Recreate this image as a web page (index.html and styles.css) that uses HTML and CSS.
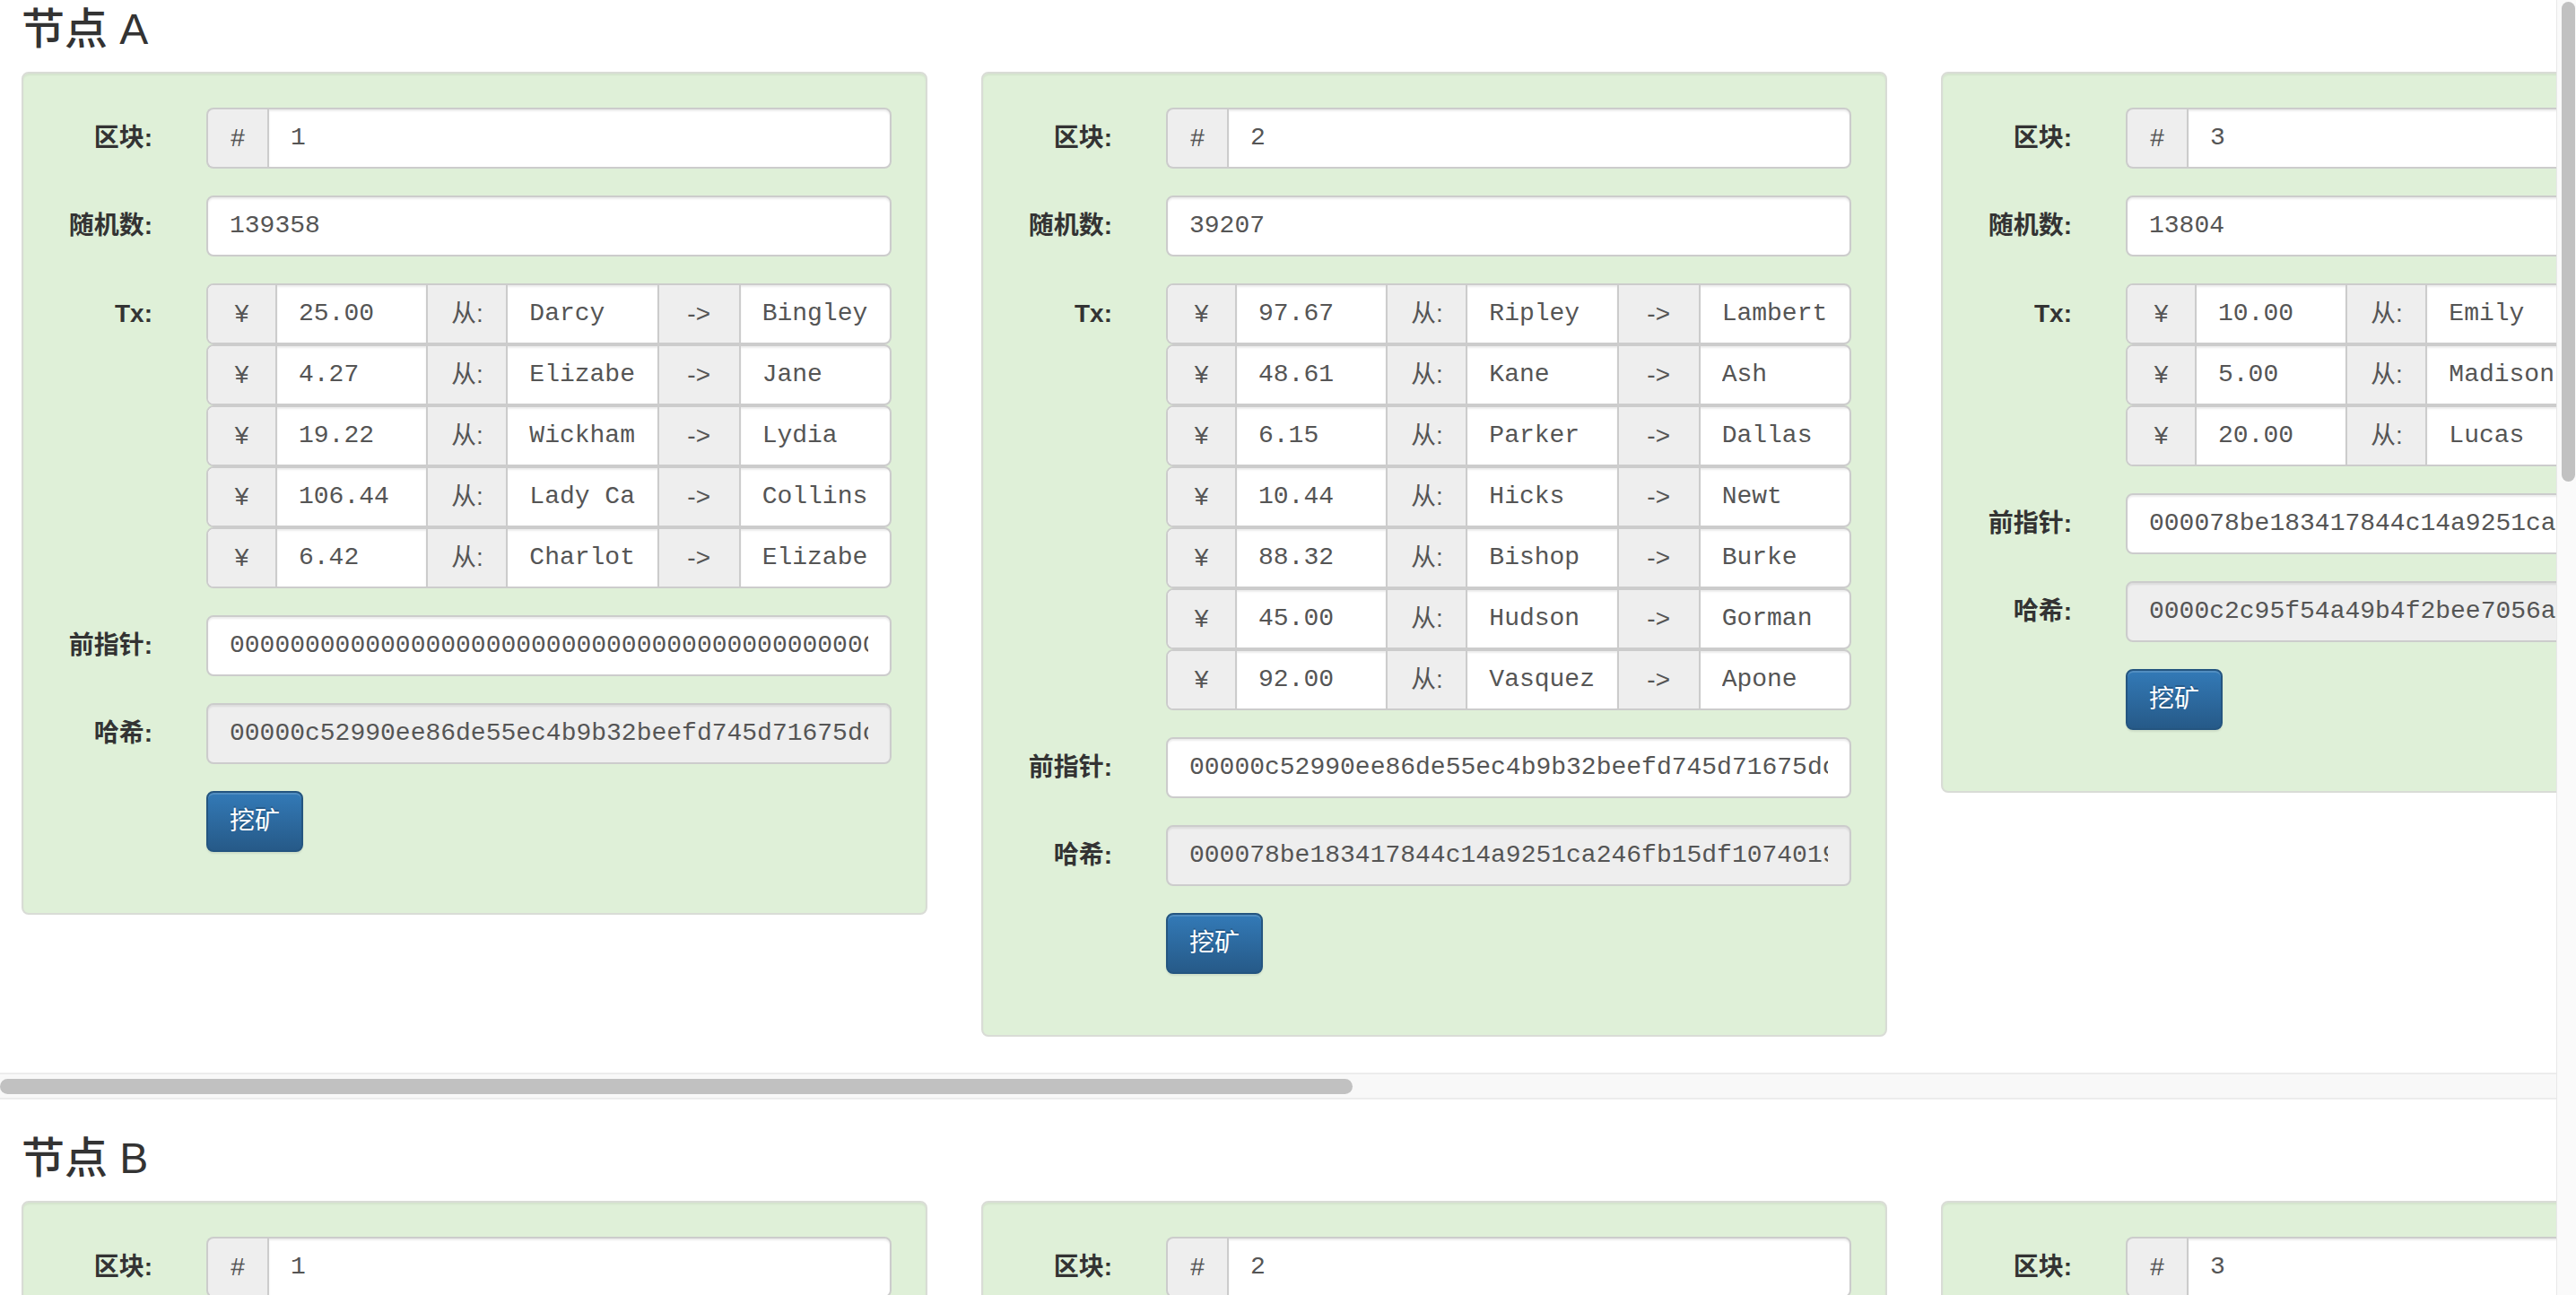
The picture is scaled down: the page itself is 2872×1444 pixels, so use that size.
FILE: index.html
```html
<!DOCTYPE html>
<html lang="zh-CN">
<head>
<meta charset="utf-8">
<title>区块链 - 分布式</title>
<link rel="stylesheet" href="styles.css">
</head>
<body>
<div class="viewport">
<main class="page">

<section class="node">
  <h3 class="node-title">节点 A</h3>
  <div class="chain">
    <div class="block">
      <div class="form-row"><div class="label">区块:</div><div class="group"><span class="addon">#</span><div class="field"><span>1</span></div></div></div>
      <div class="form-row"><div class="label">随机数:</div><div class="field"><span>139358</span></div></div>
      <div class="form-row"><div class="label">Tx:</div><div class="txs">
        <div class="tx"><span class="addon">¥</span><div class="cell"><span>25.00</span></div><span class="addon">从:</span><div class="cell"><span>Darcy</span></div><span class="addon">-&gt;</span><div class="cell"><span>Bingley</span></div></div>
        <div class="tx"><span class="addon">¥</span><div class="cell"><span>4.27</span></div><span class="addon">从:</span><div class="cell"><span>Elizabeth</span></div><span class="addon">-&gt;</span><div class="cell"><span>Jane</span></div></div>
        <div class="tx"><span class="addon">¥</span><div class="cell"><span>19.22</span></div><span class="addon">从:</span><div class="cell"><span>Wickham</span></div><span class="addon">-&gt;</span><div class="cell"><span>Lydia</span></div></div>
        <div class="tx"><span class="addon">¥</span><div class="cell"><span>106.44</span></div><span class="addon">从:</span><div class="cell"><span>Lady Catherine de Bourgh</span></div><span class="addon">-&gt;</span><div class="cell"><span>Collins</span></div></div>
        <div class="tx"><span class="addon">¥</span><div class="cell"><span>6.42</span></div><span class="addon">从:</span><div class="cell"><span>Charlotte</span></div><span class="addon">-&gt;</span><div class="cell"><span>Elizabeth</span></div></div>
      </div></div>
      <div class="form-row"><div class="label">前指针:</div><div class="field"><span>0000000000000000000000000000000000000000000000000000000000000000</span></div></div>
      <div class="form-row"><div class="label">哈希:</div><div class="field readonly"><span>00000c52990ee86de55ec4b9b32beefd745d71675dc2a3f0b1e6d8c94a7e5b2f</span></div></div>
      <div class="form-row"><button class="btn" type="button">挖矿</button></div>
    </div>
    <div class="block">
      <div class="form-row"><div class="label">区块:</div><div class="group"><span class="addon">#</span><div class="field"><span>2</span></div></div></div>
      <div class="form-row"><div class="label">随机数:</div><div class="field"><span>39207</span></div></div>
      <div class="form-row"><div class="label">Tx:</div><div class="txs">
        <div class="tx"><span class="addon">¥</span><div class="cell"><span>97.67</span></div><span class="addon">从:</span><div class="cell"><span>Ripley</span></div><span class="addon">-&gt;</span><div class="cell"><span>Lambert</span></div></div>
        <div class="tx"><span class="addon">¥</span><div class="cell"><span>48.61</span></div><span class="addon">从:</span><div class="cell"><span>Kane</span></div><span class="addon">-&gt;</span><div class="cell"><span>Ash</span></div></div>
        <div class="tx"><span class="addon">¥</span><div class="cell"><span>6.15</span></div><span class="addon">从:</span><div class="cell"><span>Parker</span></div><span class="addon">-&gt;</span><div class="cell"><span>Dallas</span></div></div>
        <div class="tx"><span class="addon">¥</span><div class="cell"><span>10.44</span></div><span class="addon">从:</span><div class="cell"><span>Hicks</span></div><span class="addon">-&gt;</span><div class="cell"><span>Newt</span></div></div>
        <div class="tx"><span class="addon">¥</span><div class="cell"><span>88.32</span></div><span class="addon">从:</span><div class="cell"><span>Bishop</span></div><span class="addon">-&gt;</span><div class="cell"><span>Burke</span></div></div>
        <div class="tx"><span class="addon">¥</span><div class="cell"><span>45.00</span></div><span class="addon">从:</span><div class="cell"><span>Hudson</span></div><span class="addon">-&gt;</span><div class="cell"><span>Gorman</span></div></div>
        <div class="tx"><span class="addon">¥</span><div class="cell"><span>92.00</span></div><span class="addon">从:</span><div class="cell"><span>Vasquez</span></div><span class="addon">-&gt;</span><div class="cell"><span>Apone</span></div></div>
      </div></div>
      <div class="form-row"><div class="label">前指针:</div><div class="field"><span>00000c52990ee86de55ec4b9b32beefd745d71675dc2a3f0b1e6d8c94a7e5b2f</span></div></div>
      <div class="form-row"><div class="label">哈希:</div><div class="field readonly"><span>000078be183417844c14a9251ca246fb15df1074019a3c5e7d2b8f6041e3c9d2</span></div></div>
      <div class="form-row"><button class="btn" type="button">挖矿</button></div>
    </div>
    <div class="block">
      <div class="form-row"><div class="label">区块:</div><div class="group"><span class="addon">#</span><div class="field"><span>3</span></div></div></div>
      <div class="form-row"><div class="label">随机数:</div><div class="field"><span>13804</span></div></div>
      <div class="form-row"><div class="label">Tx:</div><div class="txs">
        <div class="tx"><span class="addon">¥</span><div class="cell"><span>10.00</span></div><span class="addon">从:</span><div class="cell"><span>Emily</span></div><span class="addon">-&gt;</span><div class="cell"><span>Jackson</span></div></div>
        <div class="tx"><span class="addon">¥</span><div class="cell"><span>5.00</span></div><span class="addon">从:</span><div class="cell"><span>Madison</span></div><span class="addon">-&gt;</span><div class="cell"><span>Jackson</span></div></div>
        <div class="tx"><span class="addon">¥</span><div class="cell"><span>20.00</span></div><span class="addon">从:</span><div class="cell"><span>Lucas</span></div><span class="addon">-&gt;</span><div class="cell"><span>Grace</span></div></div>
      </div></div>
      <div class="form-row"><div class="label">前指针:</div><div class="field"><span>000078be183417844c14a9251ca246fb15df1074019a3c5e7d2b8f6041e3c9d2</span></div></div>
      <div class="form-row"><div class="label">哈希:</div><div class="field readonly"><span>0000c2c95f54a49b4f2bee7056ad1e8f3b2c7a9045e6b1d3f8c2a7e5b90d4c61</span></div></div>
      <div class="form-row"><button class="btn" type="button">挖矿</button></div>
    </div>
    <div class="block">
      <div class="form-row"><div class="label">区块:</div><div class="group"><span class="addon">#</span><div class="field"><span>4</span></div></div></div>
      <div class="form-row"><div class="label">随机数:</div><div class="field"><span>19668</span></div></div>
      <div class="form-row"><div class="label">Tx:</div><div class="txs">
        <div class="tx"><span class="addon">¥</span><div class="cell"><span>62.19</span></div><span class="addon">从:</span><div class="cell"><span>Jackson</span></div><span class="addon">-&gt;</span><div class="cell"><span>Ryan</span></div></div>
        <div class="tx"><span class="addon">¥</span><div class="cell"><span>867.11</span></div><span class="addon">从:</span><div class="cell"><span>Alexander</span></div><span class="addon">-&gt;</span><div class="cell"><span>Sophia</span></div></div>
        <div class="tx"><span class="addon">¥</span><div class="cell"><span>17.88</span></div><span class="addon">从:</span><div class="cell"><span>Liam</span></div><span class="addon">-&gt;</span><div class="cell"><span>Olivia</span></div></div>
      </div></div>
      <div class="form-row"><div class="label">前指针:</div><div class="field"><span>0000c2c95f54a49b4f2bee7056ad1e8f3b2c7a9045e6b1d3f8c2a7e5b90d4c61</span></div></div>
      <div class="form-row"><div class="label">哈希:</div><div class="field readonly"><span>0000a3f1e9b7c2d5846f0e1b3a7c9d2e5f8b1a4c6d9e0f3a2b5c8d1e4f7a0b3c</span></div></div>
      <div class="form-row"><button class="btn" type="button">挖矿</button></div>
    </div>
    <div class="block">
      <div class="form-row"><div class="label">区块:</div><div class="group"><span class="addon">#</span><div class="field"><span>5</span></div></div></div>
      <div class="form-row"><div class="label">随机数:</div><div class="field"><span>56125</span></div></div>
      <div class="form-row"><div class="label">Tx:</div><div class="txs">
        <div class="tx"><span class="addon">¥</span><div class="cell"><span>15.00</span></div><span class="addon">从:</span><div class="cell"><span>Ryan</span></div><span class="addon">-&gt;</span><div class="cell"><span>Ava</span></div></div>
        <div class="tx"><span class="addon">¥</span><div class="cell"><span>3.75</span></div><span class="addon">从:</span><div class="cell"><span>Sophia</span></div><span class="addon">-&gt;</span><div class="cell"><span>Noah</span></div></div>
        <div class="tx"><span class="addon">¥</span><div class="cell"><span>41.02</span></div><span class="addon">从:</span><div class="cell"><span>Grace</span></div><span class="addon">-&gt;</span><div class="cell"><span>Ethan</span></div></div>
        <div class="tx"><span class="addon">¥</span><div class="cell"><span>8.60</span></div><span class="addon">从:</span><div class="cell"><span>Olivia</span></div><span class="addon">-&gt;</span><div class="cell"><span>Mia</span></div></div>
      </div></div>
      <div class="form-row"><div class="label">前指针:</div><div class="field"><span>0000a3f1e9b7c2d5846f0e1b3a7c9d2e5f8b1a4c6d9e0f3a2b5c8d1e4f7a0b3c</span></div></div>
      <div class="form-row"><div class="label">哈希:</div><div class="field readonly"><span>00008b2e4f6a1c3d5e7f9a0b2c4d6e8f1a3b5c7d9e0f2a4b6c8d1e3f5a7b9c0d</span></div></div>
      <div class="form-row"><button class="btn" type="button">挖矿</button></div>
    </div>
  </div>
  <div class="hscroll"><div class="hthumb" style="width: 52.9%"></div></div>
</section>

<section class="node">
  <h3 class="node-title">节点 B</h3>
  <div class="chain">
    <div class="block">
      <div class="form-row"><div class="label">区块:</div><div class="group"><span class="addon">#</span><div class="field"><span>1</span></div></div></div>
      <div class="form-row"><div class="label">随机数:</div><div class="field"><span>139358</span></div></div>
      <div class="form-row"><div class="label">Tx:</div><div class="txs">
        <div class="tx"><span class="addon">¥</span><div class="cell"><span>25.00</span></div><span class="addon">从:</span><div class="cell"><span>Darcy</span></div><span class="addon">-&gt;</span><div class="cell"><span>Bingley</span></div></div>
        <div class="tx"><span class="addon">¥</span><div class="cell"><span>4.27</span></div><span class="addon">从:</span><div class="cell"><span>Elizabeth</span></div><span class="addon">-&gt;</span><div class="cell"><span>Jane</span></div></div>
        <div class="tx"><span class="addon">¥</span><div class="cell"><span>19.22</span></div><span class="addon">从:</span><div class="cell"><span>Wickham</span></div><span class="addon">-&gt;</span><div class="cell"><span>Lydia</span></div></div>
        <div class="tx"><span class="addon">¥</span><div class="cell"><span>106.44</span></div><span class="addon">从:</span><div class="cell"><span>Lady Catherine de Bourgh</span></div><span class="addon">-&gt;</span><div class="cell"><span>Collins</span></div></div>
        <div class="tx"><span class="addon">¥</span><div class="cell"><span>6.42</span></div><span class="addon">从:</span><div class="cell"><span>Charlotte</span></div><span class="addon">-&gt;</span><div class="cell"><span>Elizabeth</span></div></div>
      </div></div>
      <div class="form-row"><div class="label">前指针:</div><div class="field"><span>0000000000000000000000000000000000000000000000000000000000000000</span></div></div>
      <div class="form-row"><div class="label">哈希:</div><div class="field readonly"><span>00000c52990ee86de55ec4b9b32beefd745d71675dc2a3f0b1e6d8c94a7e5b2f</span></div></div>
      <div class="form-row"><button class="btn" type="button">挖矿</button></div>
    </div>
    <div class="block">
      <div class="form-row"><div class="label">区块:</div><div class="group"><span class="addon">#</span><div class="field"><span>2</span></div></div></div>
      <div class="form-row"><div class="label">随机数:</div><div class="field"><span>39207</span></div></div>
      <div class="form-row"><div class="label">Tx:</div><div class="txs">
        <div class="tx"><span class="addon">¥</span><div class="cell"><span>97.67</span></div><span class="addon">从:</span><div class="cell"><span>Ripley</span></div><span class="addon">-&gt;</span><div class="cell"><span>Lambert</span></div></div>
        <div class="tx"><span class="addon">¥</span><div class="cell"><span>48.61</span></div><span class="addon">从:</span><div class="cell"><span>Kane</span></div><span class="addon">-&gt;</span><div class="cell"><span>Ash</span></div></div>
        <div class="tx"><span class="addon">¥</span><div class="cell"><span>6.15</span></div><span class="addon">从:</span><div class="cell"><span>Parker</span></div><span class="addon">-&gt;</span><div class="cell"><span>Dallas</span></div></div>
        <div class="tx"><span class="addon">¥</span><div class="cell"><span>10.44</span></div><span class="addon">从:</span><div class="cell"><span>Hicks</span></div><span class="addon">-&gt;</span><div class="cell"><span>Newt</span></div></div>
        <div class="tx"><span class="addon">¥</span><div class="cell"><span>88.32</span></div><span class="addon">从:</span><div class="cell"><span>Bishop</span></div><span class="addon">-&gt;</span><div class="cell"><span>Burke</span></div></div>
        <div class="tx"><span class="addon">¥</span><div class="cell"><span>45.00</span></div><span class="addon">从:</span><div class="cell"><span>Hudson</span></div><span class="addon">-&gt;</span><div class="cell"><span>Gorman</span></div></div>
        <div class="tx"><span class="addon">¥</span><div class="cell"><span>92.00</span></div><span class="addon">从:</span><div class="cell"><span>Vasquez</span></div><span class="addon">-&gt;</span><div class="cell"><span>Apone</span></div></div>
      </div></div>
      <div class="form-row"><div class="label">前指针:</div><div class="field"><span>00000c52990ee86de55ec4b9b32beefd745d71675dc2a3f0b1e6d8c94a7e5b2f</span></div></div>
      <div class="form-row"><div class="label">哈希:</div><div class="field readonly"><span>000078be183417844c14a9251ca246fb15df1074019a3c5e7d2b8f6041e3c9d2</span></div></div>
      <div class="form-row"><button class="btn" type="button">挖矿</button></div>
    </div>
    <div class="block">
      <div class="form-row"><div class="label">区块:</div><div class="group"><span class="addon">#</span><div class="field"><span>3</span></div></div></div>
      <div class="form-row"><div class="label">随机数:</div><div class="field"><span>13804</span></div></div>
      <div class="form-row"><div class="label">Tx:</div><div class="txs">
        <div class="tx"><span class="addon">¥</span><div class="cell"><span>10.00</span></div><span class="addon">从:</span><div class="cell"><span>Emily</span></div><span class="addon">-&gt;</span><div class="cell"><span>Jackson</span></div></div>
        <div class="tx"><span class="addon">¥</span><div class="cell"><span>5.00</span></div><span class="addon">从:</span><div class="cell"><span>Madison</span></div><span class="addon">-&gt;</span><div class="cell"><span>Jackson</span></div></div>
        <div class="tx"><span class="addon">¥</span><div class="cell"><span>20.00</span></div><span class="addon">从:</span><div class="cell"><span>Lucas</span></div><span class="addon">-&gt;</span><div class="cell"><span>Grace</span></div></div>
      </div></div>
      <div class="form-row"><div class="label">前指针:</div><div class="field"><span>000078be183417844c14a9251ca246fb15df1074019a3c5e7d2b8f6041e3c9d2</span></div></div>
      <div class="form-row"><div class="label">哈希:</div><div class="field readonly"><span>0000c2c95f54a49b4f2bee7056ad1e8f3b2c7a9045e6b1d3f8c2a7e5b90d4c61</span></div></div>
      <div class="form-row"><button class="btn" type="button">挖矿</button></div>
    </div>
    <div class="block">
      <div class="form-row"><div class="label">区块:</div><div class="group"><span class="addon">#</span><div class="field"><span>4</span></div></div></div>
      <div class="form-row"><div class="label">随机数:</div><div class="field"><span>19668</span></div></div>
      <div class="form-row"><div class="label">Tx:</div><div class="txs">
        <div class="tx"><span class="addon">¥</span><div class="cell"><span>62.19</span></div><span class="addon">从:</span><div class="cell"><span>Jackson</span></div><span class="addon">-&gt;</span><div class="cell"><span>Ryan</span></div></div>
        <div class="tx"><span class="addon">¥</span><div class="cell"><span>867.11</span></div><span class="addon">从:</span><div class="cell"><span>Alexander</span></div><span class="addon">-&gt;</span><div class="cell"><span>Sophia</span></div></div>
        <div class="tx"><span class="addon">¥</span><div class="cell"><span>17.88</span></div><span class="addon">从:</span><div class="cell"><span>Liam</span></div><span class="addon">-&gt;</span><div class="cell"><span>Olivia</span></div></div>
      </div></div>
      <div class="form-row"><div class="label">前指针:</div><div class="field"><span>0000c2c95f54a49b4f2bee7056ad1e8f3b2c7a9045e6b1d3f8c2a7e5b90d4c61</span></div></div>
      <div class="form-row"><div class="label">哈希:</div><div class="field readonly"><span>0000a3f1e9b7c2d5846f0e1b3a7c9d2e5f8b1a4c6d9e0f3a2b5c8d1e4f7a0b3c</span></div></div>
      <div class="form-row"><button class="btn" type="button">挖矿</button></div>
    </div>
    <div class="block">
      <div class="form-row"><div class="label">区块:</div><div class="group"><span class="addon">#</span><div class="field"><span>5</span></div></div></div>
      <div class="form-row"><div class="label">随机数:</div><div class="field"><span>56125</span></div></div>
      <div class="form-row"><div class="label">Tx:</div><div class="txs">
        <div class="tx"><span class="addon">¥</span><div class="cell"><span>15.00</span></div><span class="addon">从:</span><div class="cell"><span>Ryan</span></div><span class="addon">-&gt;</span><div class="cell"><span>Ava</span></div></div>
        <div class="tx"><span class="addon">¥</span><div class="cell"><span>3.75</span></div><span class="addon">从:</span><div class="cell"><span>Sophia</span></div><span class="addon">-&gt;</span><div class="cell"><span>Noah</span></div></div>
        <div class="tx"><span class="addon">¥</span><div class="cell"><span>41.02</span></div><span class="addon">从:</span><div class="cell"><span>Grace</span></div><span class="addon">-&gt;</span><div class="cell"><span>Ethan</span></div></div>
        <div class="tx"><span class="addon">¥</span><div class="cell"><span>8.60</span></div><span class="addon">从:</span><div class="cell"><span>Olivia</span></div><span class="addon">-&gt;</span><div class="cell"><span>Mia</span></div></div>
      </div></div>
      <div class="form-row"><div class="label">前指针:</div><div class="field"><span>0000a3f1e9b7c2d5846f0e1b3a7c9d2e5f8b1a4c6d9e0f3a2b5c8d1e4f7a0b3c</span></div></div>
      <div class="form-row"><div class="label">哈希:</div><div class="field readonly"><span>00008b2e4f6a1c3d5e7f9a0b2c4d6e8f1a3b5c7d9e0f2a4b6c8d1e3f5a7b9c0d</span></div></div>
      <div class="form-row"><button class="btn" type="button">挖矿</button></div>
    </div>
  </div>
  <div class="hscroll"><div class="hthumb" style="width: 52.9%"></div></div>
</section>

<section class="node">
  <h3 class="node-title">节点 C</h3>
  <div class="chain">
    <div class="block">
      <div class="form-row"><div class="label">区块:</div><div class="group"><span class="addon">#</span><div class="field"><span>1</span></div></div></div>
      <div class="form-row"><div class="label">随机数:</div><div class="field"><span>139358</span></div></div>
      <div class="form-row"><div class="label">Tx:</div><div class="txs">
        <div class="tx"><span class="addon">¥</span><div class="cell"><span>25.00</span></div><span class="addon">从:</span><div class="cell"><span>Darcy</span></div><span class="addon">-&gt;</span><div class="cell"><span>Bingley</span></div></div>
        <div class="tx"><span class="addon">¥</span><div class="cell"><span>4.27</span></div><span class="addon">从:</span><div class="cell"><span>Elizabeth</span></div><span class="addon">-&gt;</span><div class="cell"><span>Jane</span></div></div>
        <div class="tx"><span class="addon">¥</span><div class="cell"><span>19.22</span></div><span class="addon">从:</span><div class="cell"><span>Wickham</span></div><span class="addon">-&gt;</span><div class="cell"><span>Lydia</span></div></div>
        <div class="tx"><span class="addon">¥</span><div class="cell"><span>106.44</span></div><span class="addon">从:</span><div class="cell"><span>Lady Catherine de Bourgh</span></div><span class="addon">-&gt;</span><div class="cell"><span>Collins</span></div></div>
        <div class="tx"><span class="addon">¥</span><div class="cell"><span>6.42</span></div><span class="addon">从:</span><div class="cell"><span>Charlotte</span></div><span class="addon">-&gt;</span><div class="cell"><span>Elizabeth</span></div></div>
      </div></div>
      <div class="form-row"><div class="label">前指针:</div><div class="field"><span>0000000000000000000000000000000000000000000000000000000000000000</span></div></div>
      <div class="form-row"><div class="label">哈希:</div><div class="field readonly"><span>00000c52990ee86de55ec4b9b32beefd745d71675dc2a3f0b1e6d8c94a7e5b2f</span></div></div>
      <div class="form-row"><button class="btn" type="button">挖矿</button></div>
    </div>
    <div class="block">
      <div class="form-row"><div class="label">区块:</div><div class="group"><span class="addon">#</span><div class="field"><span>2</span></div></div></div>
      <div class="form-row"><div class="label">随机数:</div><div class="field"><span>39207</span></div></div>
      <div class="form-row"><div class="label">Tx:</div><div class="txs">
        <div class="tx"><span class="addon">¥</span><div class="cell"><span>97.67</span></div><span class="addon">从:</span><div class="cell"><span>Ripley</span></div><span class="addon">-&gt;</span><div class="cell"><span>Lambert</span></div></div>
        <div class="tx"><span class="addon">¥</span><div class="cell"><span>48.61</span></div><span class="addon">从:</span><div class="cell"><span>Kane</span></div><span class="addon">-&gt;</span><div class="cell"><span>Ash</span></div></div>
        <div class="tx"><span class="addon">¥</span><div class="cell"><span>6.15</span></div><span class="addon">从:</span><div class="cell"><span>Parker</span></div><span class="addon">-&gt;</span><div class="cell"><span>Dallas</span></div></div>
        <div class="tx"><span class="addon">¥</span><div class="cell"><span>10.44</span></div><span class="addon">从:</span><div class="cell"><span>Hicks</span></div><span class="addon">-&gt;</span><div class="cell"><span>Newt</span></div></div>
        <div class="tx"><span class="addon">¥</span><div class="cell"><span>88.32</span></div><span class="addon">从:</span><div class="cell"><span>Bishop</span></div><span class="addon">-&gt;</span><div class="cell"><span>Burke</span></div></div>
        <div class="tx"><span class="addon">¥</span><div class="cell"><span>45.00</span></div><span class="addon">从:</span><div class="cell"><span>Hudson</span></div><span class="addon">-&gt;</span><div class="cell"><span>Gorman</span></div></div>
        <div class="tx"><span class="addon">¥</span><div class="cell"><span>92.00</span></div><span class="addon">从:</span><div class="cell"><span>Vasquez</span></div><span class="addon">-&gt;</span><div class="cell"><span>Apone</span></div></div>
      </div></div>
      <div class="form-row"><div class="label">前指针:</div><div class="field"><span>00000c52990ee86de55ec4b9b32beefd745d71675dc2a3f0b1e6d8c94a7e5b2f</span></div></div>
      <div class="form-row"><div class="label">哈希:</div><div class="field readonly"><span>000078be183417844c14a9251ca246fb15df1074019a3c5e7d2b8f6041e3c9d2</span></div></div>
      <div class="form-row"><button class="btn" type="button">挖矿</button></div>
    </div>
    <div class="block">
      <div class="form-row"><div class="label">区块:</div><div class="group"><span class="addon">#</span><div class="field"><span>3</span></div></div></div>
      <div class="form-row"><div class="label">随机数:</div><div class="field"><span>13804</span></div></div>
      <div class="form-row"><div class="label">Tx:</div><div class="txs">
        <div class="tx"><span class="addon">¥</span><div class="cell"><span>10.00</span></div><span class="addon">从:</span><div class="cell"><span>Emily</span></div><span class="addon">-&gt;</span><div class="cell"><span>Jackson</span></div></div>
        <div class="tx"><span class="addon">¥</span><div class="cell"><span>5.00</span></div><span class="addon">从:</span><div class="cell"><span>Madison</span></div><span class="addon">-&gt;</span><div class="cell"><span>Jackson</span></div></div>
        <div class="tx"><span class="addon">¥</span><div class="cell"><span>20.00</span></div><span class="addon">从:</span><div class="cell"><span>Lucas</span></div><span class="addon">-&gt;</span><div class="cell"><span>Grace</span></div></div>
      </div></div>
      <div class="form-row"><div class="label">前指针:</div><div class="field"><span>000078be183417844c14a9251ca246fb15df1074019a3c5e7d2b8f6041e3c9d2</span></div></div>
      <div class="form-row"><div class="label">哈希:</div><div class="field readonly"><span>0000c2c95f54a49b4f2bee7056ad1e8f3b2c7a9045e6b1d3f8c2a7e5b90d4c61</span></div></div>
      <div class="form-row"><button class="btn" type="button">挖矿</button></div>
    </div>
    <div class="block">
      <div class="form-row"><div class="label">区块:</div><div class="group"><span class="addon">#</span><div class="field"><span>4</span></div></div></div>
      <div class="form-row"><div class="label">随机数:</div><div class="field"><span>19668</span></div></div>
      <div class="form-row"><div class="label">Tx:</div><div class="txs">
        <div class="tx"><span class="addon">¥</span><div class="cell"><span>62.19</span></div><span class="addon">从:</span><div class="cell"><span>Jackson</span></div><span class="addon">-&gt;</span><div class="cell"><span>Ryan</span></div></div>
        <div class="tx"><span class="addon">¥</span><div class="cell"><span>867.11</span></div><span class="addon">从:</span><div class="cell"><span>Alexander</span></div><span class="addon">-&gt;</span><div class="cell"><span>Sophia</span></div></div>
        <div class="tx"><span class="addon">¥</span><div class="cell"><span>17.88</span></div><span class="addon">从:</span><div class="cell"><span>Liam</span></div><span class="addon">-&gt;</span><div class="cell"><span>Olivia</span></div></div>
      </div></div>
      <div class="form-row"><div class="label">前指针:</div><div class="field"><span>0000c2c95f54a49b4f2bee7056ad1e8f3b2c7a9045e6b1d3f8c2a7e5b90d4c61</span></div></div>
      <div class="form-row"><div class="label">哈希:</div><div class="field readonly"><span>0000a3f1e9b7c2d5846f0e1b3a7c9d2e5f8b1a4c6d9e0f3a2b5c8d1e4f7a0b3c</span></div></div>
      <div class="form-row"><button class="btn" type="button">挖矿</button></div>
    </div>
    <div class="block">
      <div class="form-row"><div class="label">区块:</div><div class="group"><span class="addon">#</span><div class="field"><span>5</span></div></div></div>
      <div class="form-row"><div class="label">随机数:</div><div class="field"><span>56125</span></div></div>
      <div class="form-row"><div class="label">Tx:</div><div class="txs">
        <div class="tx"><span class="addon">¥</span><div class="cell"><span>15.00</span></div><span class="addon">从:</span><div class="cell"><span>Ryan</span></div><span class="addon">-&gt;</span><div class="cell"><span>Ava</span></div></div>
        <div class="tx"><span class="addon">¥</span><div class="cell"><span>3.75</span></div><span class="addon">从:</span><div class="cell"><span>Sophia</span></div><span class="addon">-&gt;</span><div class="cell"><span>Noah</span></div></div>
        <div class="tx"><span class="addon">¥</span><div class="cell"><span>41.02</span></div><span class="addon">从:</span><div class="cell"><span>Grace</span></div><span class="addon">-&gt;</span><div class="cell"><span>Ethan</span></div></div>
        <div class="tx"><span class="addon">¥</span><div class="cell"><span>8.60</span></div><span class="addon">从:</span><div class="cell"><span>Olivia</span></div><span class="addon">-&gt;</span><div class="cell"><span>Mia</span></div></div>
      </div></div>
      <div class="form-row"><div class="label">前指针:</div><div class="field"><span>0000a3f1e9b7c2d5846f0e1b3a7c9d2e5f8b1a4c6d9e0f3a2b5c8d1e4f7a0b3c</span></div></div>
      <div class="form-row"><div class="label">哈希:</div><div class="field readonly"><span>00008b2e4f6a1c3d5e7f9a0b2c4d6e8f1a3b5c7d9e0f2a4b6c8d1e3f5a7b9c0d</span></div></div>
      <div class="form-row"><button class="btn" type="button">挖矿</button></div>
    </div>
  </div>
  <div class="hscroll"><div class="hthumb" style="width: 52.9%"></div></div>
</section>

</main>
<div class="vscroll"><div class="vthumb"></div></div>
</div>
</body>
</html>
```

FILE: styles.css
```css
* {
  box-sizing: border-box;
}

html {
  background: #fff;
}

body {
  margin: 0;
  font-family: "Liberation Sans", "Noto Sans CJK SC", sans-serif;
  font-size: 28px;
  line-height: 1.42857;
  color: #333;
}

/* page + vertical scroll bar column */
.viewport {
  display: flex;
  align-items: stretch;
}

.page {
  flex: 1 1 auto;
  min-width: 0;
  overflow: hidden;
  padding-bottom: 140px;
}

.vscroll {
  flex: 0 0 22px;
  background: #fafafa;
  border-left: 1px solid #e8e8e8;
  padding: 2px 1px 0 5px;
}

.vthumb {
  height: 535px;
  background: #c1c1c1;
  border-radius: 8px;
}

/* ---------- node heading ---------- */
.node-title {
  margin: 40px 24px 20px;
  font-size: 48px;
  font-weight: 500;
  line-height: 1.1;
  color: #333;
}

.node:first-child .node-title {
  margin-top: 7px;
}

/* ---------- horizontal chain of blocks ---------- */
.chain {
  display: flex;
  align-items: flex-start;
  gap: 60px;
  overflow: hidden;
  padding: 0 24px 40px 24px;
}

.hscroll {
  height: 30px;
  background: #f8f8f8;
  border-top: 2px solid #ececec;
  border-bottom: 2px solid #ececec;
  padding-top: 5px;
}

.hthumb {
  height: 17px;
  background: #c1c1c1;
  border-radius: 9px;
}

.block {
  flex: 0 0 1010px;
  width: 1010px;
  background: #dff0d8;
  border: 2px solid #d9dcd6;
  border-radius: 8px;
  padding: 38px;
  box-shadow: inset 0 2px 2px rgba(0, 0, 0, 0.05);
}

/* ---------- form rows ---------- */
.form-row {
  display: grid;
  grid-template-columns: 106px minmax(0, 1fr);
  column-gap: 60px;
  margin-bottom: 30px;
}

.label {
  text-align: right;
  font-weight: 700;
  padding-top: 14px;
  line-height: 40px;
  white-space: nowrap;
  color: #333;
}

.field {
  min-width: 0;
  height: 68px;
  border: 2px solid #ccc;
  border-radius: 8px;
  background: #fff;
  padding: 12px 24px;
  font-family: "Liberation Mono", monospace;
  font-size: 28px;
  line-height: 40px;
  color: #555;
  box-shadow: inset 0 2px 2px rgba(0, 0, 0, 0.075);
}

.field > span,
.cell > span {
  display: block;
  overflow: hidden;
  white-space: nowrap;
}

.field.readonly {
  background: #eee;
}

/* block number group */
.group {
  display: grid;
  grid-template-columns: 68px minmax(0, 1fr);
}

.group .addon {
  border: 2px solid #ccc;
  border-right: 0;
  border-radius: 8px 0 0 8px;
  background: #eee;
  color: #555;
  text-align: center;
  padding: 12px 0;
  line-height: 40px;
}

.group .field {
  border-radius: 0 8px 8px 0;
}

/* transactions */
.txs {
  display: flex;
  flex-direction: column;
  min-width: 0;
}

.tx {
  display: grid;
  grid-template-columns: 75px minmax(0, 1fr) 89px minmax(0, 1fr) 91px minmax(0, 1fr);
  height: 68px;
  border: 2px solid #ccc;
  border-radius: 8px;
  overflow: hidden;
  background: #fff;
}

.tx > * + * {
  border-left: 2px solid #ccc;
}

.tx .addon {
  background: #eee;
  color: #555;
  text-align: center;
  line-height: 64px;
  white-space: nowrap;
}

.tx .cell {
  min-width: 0;
  padding: 0 24px;
  font-family: "Liberation Mono", monospace;
  line-height: 64px;
  color: #555;
  box-shadow: inset 0 2px 2px rgba(0, 0, 0, 0.075);
}

/* mine button */
.btn {
  grid-column: 2;
  justify-self: start;
  font-family: inherit;
  font-size: 28px;
  line-height: 40px;
  padding: 12px 24px;
  color: #fff;
  background-color: #265a88;
  background-image: linear-gradient(#337ab7, #265a88);
  border: 2px solid #245580;
  border-radius: 8px;
  text-shadow: 0 -2px 0 rgba(0, 0, 0, 0.2);
  box-shadow: inset 0 2px 0 rgba(255, 255, 255, 0.15), 0 2px 2px rgba(0, 0, 0, 0.075);
  cursor: pointer;
}
```
